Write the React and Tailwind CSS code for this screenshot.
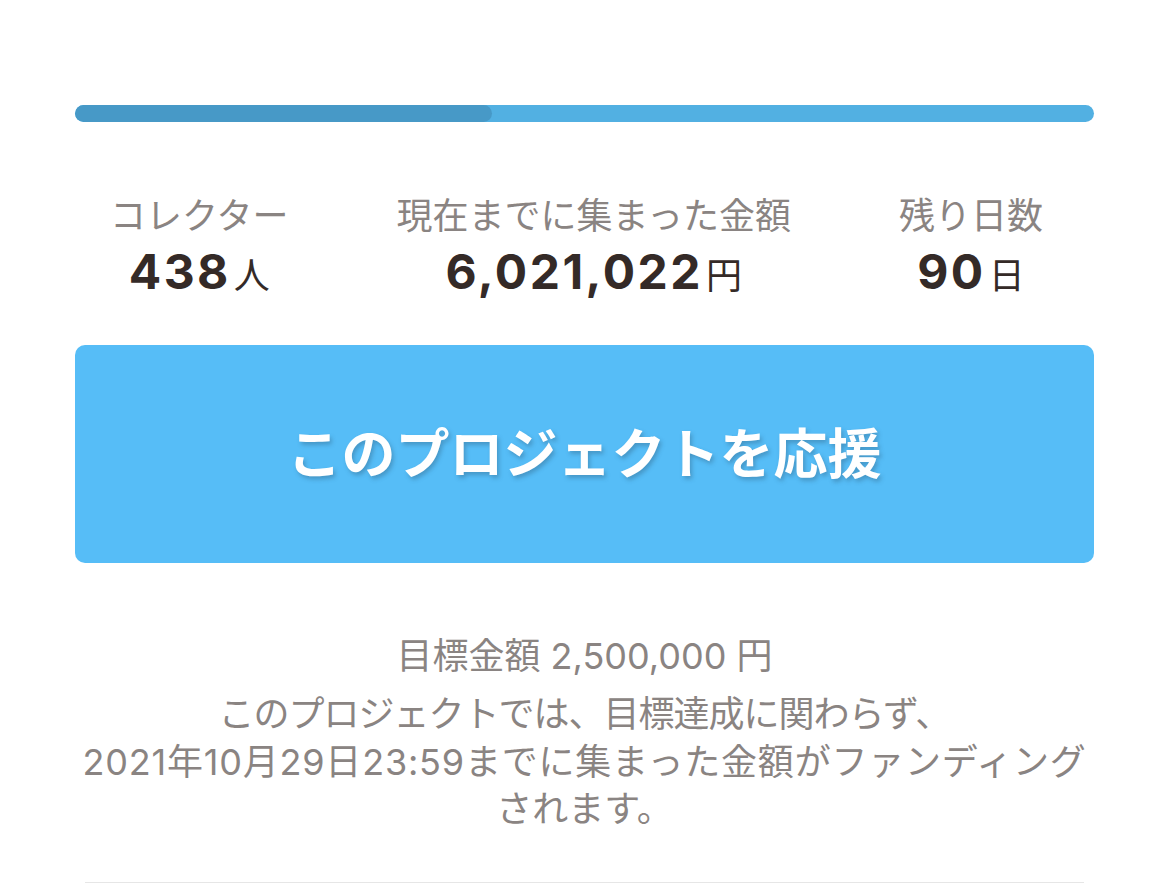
import React from 'react';

const stats = [
    { label: 'コレクター', value: '438', unit: '人' },
    { label: '現在までに集まった金額', value: '6,021,022', unit: '円' },
    { label: '残り日数', value: '90', unit: '日' },
];

const App = () => {
    const progress = 40.9;

    return (
        <div className="min-h-[883px] bg-white font-['Inter','Noto_Sans_CJK_JP',sans-serif]">
            <div className="mx-[75px] pt-[105px]">
                {/* progress bar */}
                <div className="h-[17px] w-full overflow-hidden rounded-full bg-[#52b0e2]">
                    <div className="h-full rounded-full bg-[#4799c7]" style={{ width: `${progress}%` }} />
                </div>

                {/* stats */}
                <div className="mt-[72px] flex justify-between pl-[35px] pr-[51px]">
                    {stats.map((s) => (
                        <div key={s.label} className="flex flex-col items-center">
                            <span className="text-[36px] leading-[44px] text-[#8a8482]">{s.label}</span>
                            <span className="mt-[6px] flex items-baseline text-[#342a27]">
                                <span className="text-[48px] font-bold leading-[56px] tracking-[2.5px]">{s.value}</span>
                                <span className="ml-[3px] text-[36px] leading-[56px]">{s.unit}</span>
                            </span>
                        </div>
                    ))}
                </div>

                {/* support button */}
                <button className="mt-[41px] flex h-[218px] w-full items-center justify-center rounded-[10px] bg-[#56bdf7] text-[54px] font-bold text-white [text-shadow:2px_3px_4px_rgba(40,80,110,0.35)]">
                    このプロジェクトを応援
                </button>

                {/* goal */}
                <div className="mt-[69px] flex flex-col items-center text-[36px] text-[#8a8482]">
                    <p className="leading-[48px]">目標金額 2,500,000 円</p>
                    <div className="mt-[11px] flex flex-col items-center leading-[47.5px]">
                        <p className="whitespace-nowrap tracking-[-1px]">このプロジェクトでは、目標達成に関わらず、</p>
                        <p className="whitespace-nowrap tracking-[0.8px]">2021年10月29日23:59までに集まった金額がファンディング</p>
                        <p className="whitespace-nowrap">されます。</p>
                    </div>
                </div>

                <div className="mx-[10px] mt-[48px] border-t border-[#e6e6e6]" />
            </div>
        </div>
    );
};

export default App;
